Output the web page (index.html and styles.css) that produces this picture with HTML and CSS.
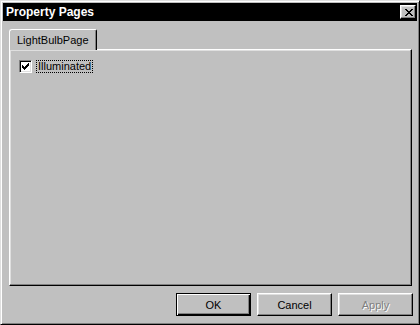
FILE: index.html
```html
<!DOCTYPE html>
<html>

<head>
    <title>Property Pages</title>
    <link rel="stylesheet" href="styles.css">
</head>

<body>
    <div class="window">
        <div class="titlebar">
            <span class="title">Property Pages</span>
            <div class="close-btn">
                <svg width="8" height="7" viewBox="0 0 8 7" shape-rendering="crispEdges">
                    <path d="M0 0h2v1h-2zM6 0h2v1h-2zM1 1h2v1h-2zM5 1h2v1h-2zM2 2h4v1h-4zM3 3h2v1h-2zM2 4h4v1h-4zM1 5h2v1h-2zM5 5h2v1h-2zM0 6h2v1h-2zM6 6h2v1h-2z" fill="#000"/>
                </svg>
            </div>
        </div>

        <div class="content">
            <div class="tabs">
                <div class="tab">LightBulbPage</div>
            </div>
            <div class="panel">
                <label class="check-row">
                    <span class="checkbox">
                        <svg width="7" height="7" viewBox="0 0 7 7" shape-rendering="crispEdges">
                            <path d="M6 0h1v3h-1zM5 1h1v3h-1zM4 2h1v3h-1zM3 3h1v3h-1zM2 4h1v3h-1zM1 3h1v3h-1zM0 2h1v3h-1z" fill="#000"/>
                        </svg>
                    </span>
                    <span class="check-label">Illuminated</span>
                </label>
            </div>
            <div class="buttons">
                <div class="btn default"><span>OK</span></div>
                <div class="btn"><span>Cancel</span></div>
                <div class="btn disabled"><span>Apply</span></div>
            </div>
        </div>
    </div>
</body>

</html>
```

FILE: styles.css
```css
body {
    margin: 0;
    background-color: #c0c0c0;
    font-family: "Liberation Sans", Arial, sans-serif;
    font-size: 11px;
}

.window {
    width: 420px;
    height: 325px;
    box-sizing: border-box;
    background-color: #c0c0c0;
    border: 1px solid;
    border-color: #dfdfdf #000 #000 #dfdfdf;
    box-shadow: inset 1px 1px #fff, inset -1px -1px #808080;
    padding: 2px;
}

.titlebar {
    height: 18px;
    background-color: #000;
    display: flex;
    align-items: center;
    justify-content: space-between;
    padding: 0 1px 0 3px;
}

.title {
    color: white;
    font-weight: bold;
    font-size: 12px;
}

.close-btn {
    width: 16px;
    height: 14px;
    box-sizing: border-box;
    background-color: #c0c0c0;
    border: 1px solid;
    border-color: #fff #000 #000 #fff;
    box-shadow: inset -1px -1px #808080, inset 1px 1px #dfdfdf;
    display: flex;
    align-items: center;
    justify-content: center;
    padding-left: 1px;
}

.close-btn svg {
    display: block;
}

.content {
    padding: 8px 5px 0 6px;
}

.tabs {
    display: flex;
    height: 20px;
}

.tab {
    position: relative;
    z-index: 1;
    height: 21px;
    box-sizing: border-box;
    background-color: #c0c0c0;
    border-left: 1px solid #fff;
    border-top: 1px solid #fff;
    border-right: 1px solid #000;
    border-radius: 3px 2px 0 0;
    box-shadow: inset -1px 0 #808080;
    padding: 3px 7px 0 7px;
    line-height: 14px;
    color: #000;
}

.panel {
    height: 237px;
    box-sizing: border-box;
    border: 1px solid;
    border-color: #fff #000 #000 #fff;
    box-shadow: inset -1px -1px #808080, inset 1px 1px #dfdfdf;
    padding: 10px 9px;
}

.check-row {
    display: flex;
    align-items: center;
}

.checkbox {
    width: 13px;
    height: 13px;
    box-sizing: border-box;
    background-color: #fff;
    border: 1px solid;
    border-color: #808080 #fff #fff #808080;
    box-shadow: inset 1px 1px #000, inset -1px -1px #dfdfdf;
    display: flex;
    align-items: center;
    justify-content: center;
}

.checkbox svg {
    display: block;
}

.check-label {
    margin-left: 4px;
    padding: 0 1px;
    line-height: 11px;
    border: 1px dotted #000;
}

.buttons {
    display: flex;
    justify-content: flex-end;
    gap: 6px;
    margin-top: 7px;
    margin-right: -1px;
}

.btn {
    width: 75px;
    height: 23px;
    box-sizing: border-box;
    border: 1px solid;
    border-color: #fff #000 #000 #fff;
    box-shadow: inset -1px -1px #808080, inset 1px 1px #dfdfdf;
    display: flex;
    align-items: center;
    justify-content: center;
    color: #000;
}

.btn.default {
    border: 1px solid #000;
    box-shadow: inset 1px 1px #fff, inset -1px -1px #000, inset -2px -2px #808080;
}

.btn.disabled {
    color: #808080;
    text-shadow: 1px 1px #fff;
}
```
